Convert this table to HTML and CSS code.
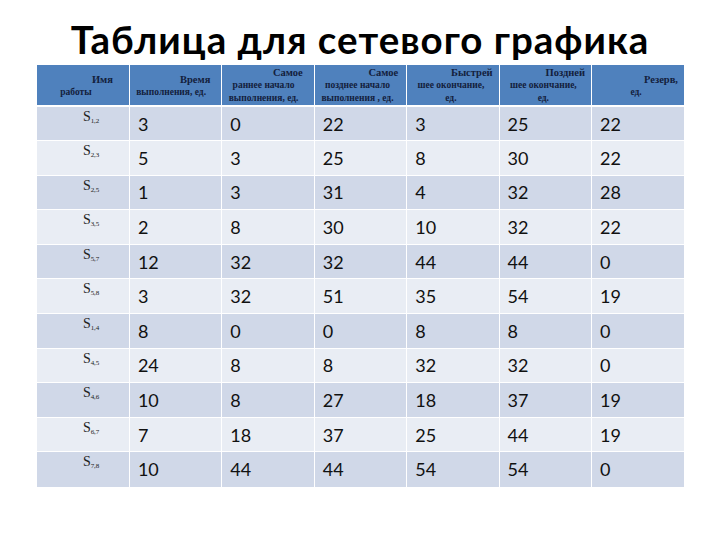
FILE: index.html
```html
<!DOCTYPE html>
<html lang="ru">
<head>
<meta charset="utf-8">
<title>Таблица для сетевого графика</title>
<link rel="stylesheet" href="styles.css">
</head>
<body>
<h1 class="title">Таблица для сетевого графика</h1>
<table class="grid">
  <thead>
    <tr>
      <th><div class="hd hd-c1"><span class="l1">Имя</span><span>работы</span></div></th>
      <th><div class="hd hd-c2"><span class="l1">Время</span><span>выполнения, ед.</span></div></th>
      <th><div class="hd hd-c3"><span class="l1">Самое</span><span>раннее начало</span><span>выполнения, ед.</span></div></th>
      <th><div class="hd hd-c4"><span class="l1">Самое</span><span>позднее начало</span><span>выполнения , ед.</span></div></th>
      <th><div class="hd"><span class="l1">Быстрей</span><span>шее окончание,</span><span>ед.</span></div></th>
      <th><div class="hd"><span class="l1">Поздней</span><span>шее окончание,</span><span>ед.</span></div></th>
      <th><div class="hd"><span class="l1">Резерв,</span><span>ед.</span></div></th>
    </tr>
  </thead>
  <tbody>
    <tr><td class="job">S<sub>1,2</sub></td><td>3</td><td>0</td><td>22</td><td>3</td><td>25</td><td>22</td></tr>
    <tr><td class="job">S<sub>2,3</sub></td><td>5</td><td>3</td><td>25</td><td>8</td><td>30</td><td>22</td></tr>
    <tr><td class="job">S<sub>2,5</sub></td><td>1</td><td>3</td><td>31</td><td>4</td><td>32</td><td>28</td></tr>
    <tr><td class="job">S<sub>3,5</sub></td><td>2</td><td>8</td><td>30</td><td>10</td><td>32</td><td>22</td></tr>
    <tr><td class="job">S<sub>5,7</sub></td><td>12</td><td>32</td><td>32</td><td>44</td><td>44</td><td>0</td></tr>
    <tr><td class="job">S<sub>5,8</sub></td><td>3</td><td>32</td><td>51</td><td>35</td><td>54</td><td>19</td></tr>
    <tr><td class="job">S<sub>1,4</sub></td><td>8</td><td>0</td><td>0</td><td>8</td><td>8</td><td>0</td></tr>
    <tr><td class="job">S<sub>4,5</sub></td><td>24</td><td>8</td><td>8</td><td>32</td><td>32</td><td>0</td></tr>
    <tr><td class="job">S<sub>4,6</sub></td><td>10</td><td>8</td><td>27</td><td>18</td><td>37</td><td>19</td></tr>
    <tr><td class="job">S<sub>6,7</sub></td><td>7</td><td>18</td><td>37</td><td>25</td><td>44</td><td>19</td></tr>
    <tr><td class="job">S<sub>7,8</sub></td><td>10</td><td>44</td><td>44</td><td>54</td><td>54</td><td>0</td></tr>
  </tbody>
</table>
</body>
</html>
```
FILE: styles.css
```css
html, body {
  margin: 0;
  padding: 0;
  background: #ffffff;
}

body {
  width: 720px;
  height: 540px;
  overflow: hidden;
}

.title {
  margin: 0;
  padding-top: 19px;
  height: 65px;
  box-sizing: border-box;
  line-height: 40px;
  text-align: center;
  font-family: "Lato", "Open Sans", sans-serif;
  font-weight: 700;
  font-size: 38.5px;
  letter-spacing: 1px;
  color: #000000;
  white-space: nowrap;
}

.grid {
  margin-top: 0;
  margin-left: 37px;
  width: 647px;
  table-layout: fixed;
  border-collapse: collapse;
}

.grid th,
.grid td {
  border: 1px solid #ffffff;
  padding: 0;
}

.grid thead tr {
  height: 37px;
}

.grid tbody tr {
  height: 34.6px;
}

.grid th {
  background: #4f81bd;
  border-bottom: 2px solid #ffffff;
  border-top: 0;
  vertical-align: middle;
}

.grid td {
  padding-left: 8px;
  font-family: "Lato", "Open Sans", sans-serif;
  font-size: 18px;
  line-height: 20px;
  color: #111111;
  vertical-align: middle;
  text-align: left;
}

.grid tbody tr:nth-child(odd) td {
  background: #d0d8e8;
}

.grid tbody tr:nth-child(even) td {
  background: #e9edf4;
}

.grid tr > :first-child {
  border-left: 0;
}

.grid tr > :last-child {
  border-right: 0;
}

.grid tbody tr:last-child td {
  border-bottom: 0;
}

.hd {
  display: flex;
  flex-direction: column;
  align-items: center;
  padding: 1px 6px 0 2px;
  font-family: "Liberation Serif", "Times New Roman", serif;
  font-size: 9.5px;
  line-height: 13px;
  font-weight: 700;
  color: #13203c;
  white-space: nowrap;
}

.hd .l1 {
  align-self: flex-end;
  font-size: 10.5px;
}

.hd-c1 {
  padding-right: 16px;
}

.hd-c2,
.hd-c3 {
  padding-right: 11px;
}

.hd-c4 {
  padding-right: 8px;
}

.grid td.job {
  vertical-align: top;
  padding-left: 46px;
  padding-top: 3px;
  font-family: "Liberation Serif", "Times New Roman", serif;
  font-size: 14px;
  line-height: 14px;
  color: #222222;
}

.job sub {
  font-size: 7px;
  vertical-align: -2px;
  letter-spacing: -0.2px;
}
```
